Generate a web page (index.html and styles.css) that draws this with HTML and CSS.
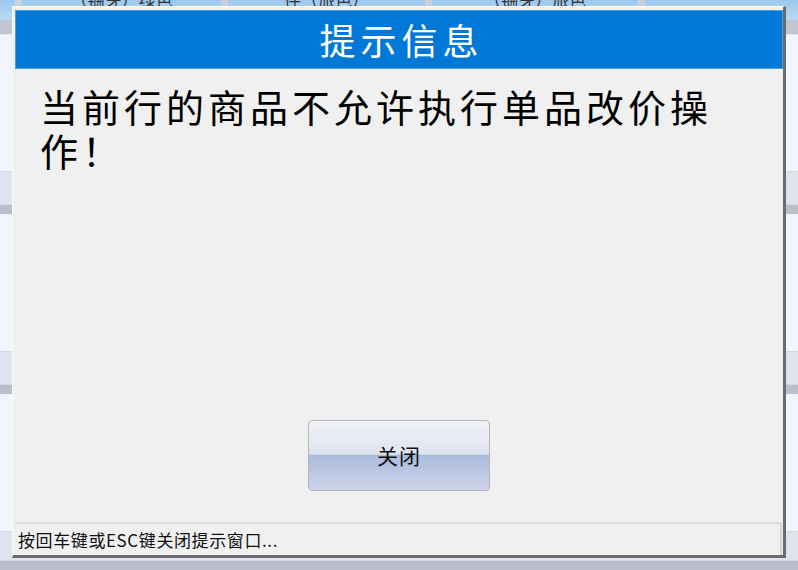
FILE: index.html
```html
<!DOCTYPE html>
<html lang="zh-CN">
<head>
    <meta charset="UTF-8">
    <title>提示信息</title>
    <link rel="stylesheet" href="styles.css">
</head>
<body>
    <!-- 背后的商品列表 -->
    <div class="grid">
        <div class="grid-head">
            <div class="cell c1"></div>
            <div class="cell c2">（锎牙）绿色</div>
            <div class="cell c3">件（旅色）</div>
            <div class="cell c4">（锎牙）旅色</div>
            <div class="cell c5"></div>
        </div>
        <div class="band"></div>
        <div class="row light tall"></div>
        <div class="row grey"></div>
        <div class="row dark"></div>
        <div class="row light mid"></div>
        <div class="row grey"></div>
        <div class="row dark"></div>
        <div class="row light mid2"></div>
        <div class="row grey short"></div>
        <div class="row dark"></div>
    </div>

    <!-- 提示窗口 -->
    <div class="dialog">
        <div class="dialog-title">提示信息</div>
        <div class="dialog-body">
            <p class="message">当前行的商品不允许执行单品改价操作！</p>
        </div>
        <div class="dialog-actions">
            <button class="close-button">关闭</button>
        </div>
        <div class="status-bar">
            <span class="status-text">按回车键或ESC键关闭提示窗口...</span>
        </div>
    </div>
</body>
</html>
```

FILE: styles.css
```css
html, body {
    margin: 0;
    padding: 0;
}
body {
    width: 798px;
    height: 570px;
    overflow: hidden;
    position: relative;
    background-color: #f3f6fd;
    font-family: "Noto Sans CJK SC", "Liberation Sans", sans-serif;
}
.grid {
    display: flex;
    flex-direction: column;
}
.grid-head {
    display: flex;
    height: 20px;
    background: linear-gradient(#9cc8ee, #b9daf4);
    overflow: hidden;
}
.cell {
    border-right: 7px solid #c9cfdc;
    font-size: 17px;
    line-height: 18px;
    margin-top: -9px;
    color: #333;
    text-align: center;
}
.c1 { width: 15px; }
.c2 { width: 199px; }
.c3 { width: 197px; }
.c4 { width: 206px; }
.c5 { flex: 1; border-right: none; }
.band {
    height: 14px;
    background-color: #c3c4d2;
    border-bottom: 1px solid #e8e9ef;
}
.row {
    border-bottom: 1px solid #d6d8e0;
}
.light { background-color: #f2f5fd; }
.grey { height: 32px; background-color: #dfe3ee; }
.dark { height: 9px; background-color: #bcbdcd; border-bottom: 1px solid #eef0f6; }
.tall { height: 136px; }
.mid { height: 136px; }
.mid2 { height: 136px; }
.short { height: 28px; }

.dialog {
    position: absolute;
    left: 12px;
    top: 6px;
    width: 774px;
    height: 552px;
    box-sizing: border-box;
    display: flex;
    flex-direction: column;
    background-color: #f0f0f0;
    border-top: 1px solid #fbfbfb;
    border-left: 1px solid #fbfbfb;
    border-right: 3px solid #6b6b6b;
    border-bottom: 3px solid #6b6b6b;
    padding: 3px 0 0 2px;
}
.dialog-title {
    height: 59px;
    box-sizing: border-box;
    background-color: #0078d7;
    border: 1px solid #4a9fe2;
    color: #fff;
    font-size: 36px;
    line-height: 56px;
    text-align: center;
    letter-spacing: 5px;
    padding-left: 5px;
}
.dialog-body {
    flex: 1;
    padding: 15px 20px 0 25px;
}
.message {
    margin: 0;
    width: 700px;
    font-size: 38px;
    line-height: 44px;
    letter-spacing: 4px;
    color: #000;
}
.dialog-actions {
    display: flex;
    justify-content: center;
    padding-bottom: 31px;
}
.close-button {
    width: 182px;
    height: 71px;
    margin-right: 0;
    border: 1px solid #b4b6bc;
    border-radius: 4px;
    background: linear-gradient(#f1f2f7 0%, #dfe3ee 48%, #aabcdb 50%, #bcc8e2 75%, #cdd4ea 100%);
    font-family: "Noto Sans CJK SC", sans-serif;
    font-size: 21px;
    letter-spacing: 1px;
    line-height: 67px;
    color: #111;
    padding: 0;
}
.status-bar {
    height: 33px;
    box-sizing: border-box;
    border-top: 2px solid #dcdcdc;
    border-right: 2px solid #d4d4d4;
    margin-right: 1px;
    display: flex;
    align-items: center;
    padding-left: 3px;
}
.status-text {
    font-size: 17px;
    letter-spacing: 0.6px;
    color: #111;
}
```
